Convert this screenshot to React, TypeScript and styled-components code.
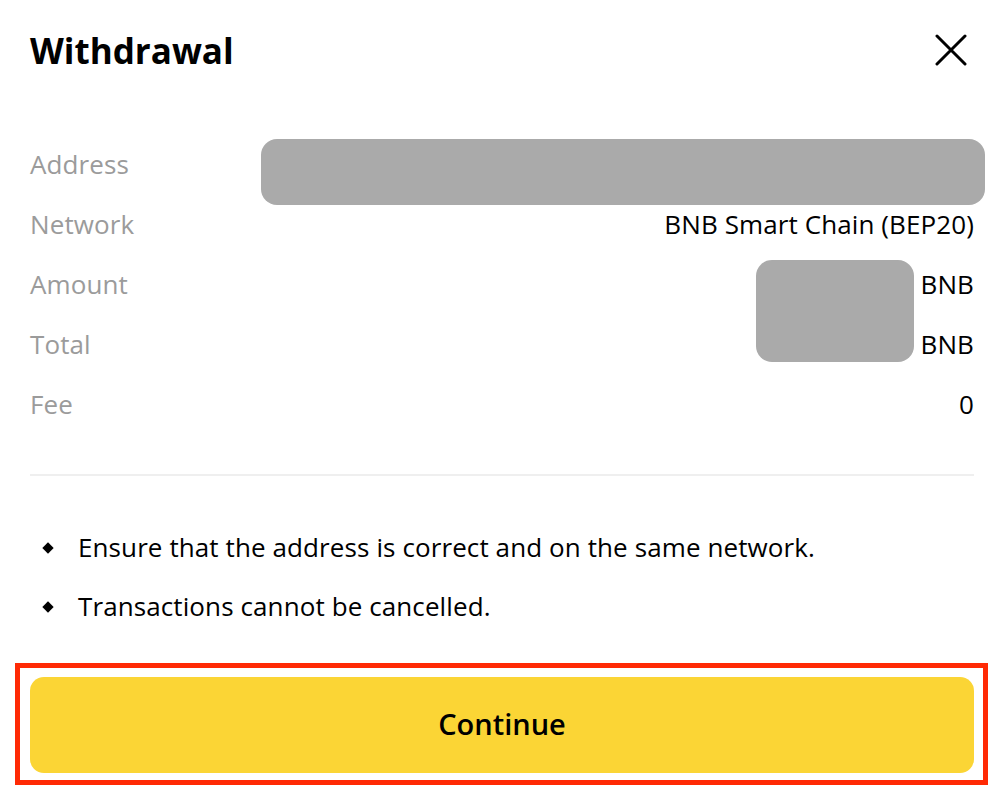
import React from "react";
import styled, { createGlobalStyle } from "styled-components";

const FONT = `"Open Sans", "Liberation Sans", sans-serif`;

const Global = createGlobalStyle`
  html, body { margin: 0; padding: 0; background: #ffffff; }
  body { font-family: ${FONT}; color: #000; }
`;

const Page = styled.div`
  width: 1006px;
  box-sizing: border-box;
  padding: 0 32px 0 30px;
`;

const Header = styled.div`
  height: 100px;
  display: flex;
  align-items: center;
  justify-content: space-between;
`;

const Title = styled.h1`
  margin: 0;
  font-size: 35px;
  font-weight: 700;
`;

const CloseButton = styled.button`
  border: 0;
  background: none;
  padding: 0;
  margin-right: 7px;
  width: 32px;
  height: 32px;
  display: flex;
  align-items: center;
  justify-content: center;
  cursor: pointer;
`;

const Details = styled.div`
  margin-top: 35px;
  display: grid;
  grid-template-columns: 231px 1fr;
  grid-template-rows: repeat(5, 60px);
  font-size: 26px;
  letter-spacing: 0.1px;
`;

const Label = styled.div<{ $row: number }>`
  grid-column: 1;
  grid-row: ${(p) => p.$row};
  display: flex;
  align-items: center;
  padding-bottom: 2px;
  color: #9b9b9b;
`;

const Value = styled.div<{ $row: number; $span?: number }>`
  grid-column: 2;
  grid-row: ${(p) => p.$row} / span ${(p) => p.$span ?? 1};
  display: flex;
  align-items: center;
  justify-content: flex-end;
  padding-bottom: 2px;
  color: #000;
`;

const Redacted = styled.div<{ $w?: string; $h: number }>`
  background: #aaaaaa;
  border-radius: 16px;
  width: ${(p) => p.$w ?? "auto"};
  height: ${(p) => p.$h}px;
`;

const AddressValue = styled(Value)`
  align-items: flex-start;
  justify-content: stretch;
  padding-bottom: 0;
  margin-right: -11px;
  & > div { flex: 1; margin-top: 4px; }
`;

const AmountCell = styled(Value)`
  align-items: flex-start;
  padding-bottom: 0;
  gap: 7px;
`;

const AmountBox = styled(Redacted)`
  margin-top: 5px;
`;

const UnitColumn = styled.div`
  display: grid;
  grid-template-rows: 60px 60px;
  & > span {
    display: flex;
    align-items: center;
    justify-content: flex-end;
    padding-bottom: 2px;
  }
`;

const Divider = styled.hr`
  margin: 39px 0 0;
  border: 0;
  height: 2px;
  background: #efefef;
`;

const Notes = styled.ul`
  list-style: none;
  margin: 42px 0 0;
  padding: 0;
`;

const Note = styled.li`
  position: relative;
  box-sizing: border-box;
  height: 59px;
  display: flex;
  align-items: center;
  padding: 0 0 2px 48px;
  font-size: 26px;
  letter-spacing: 0.1px;
  color: #000;
  &::before {
    content: "";
    position: absolute;
    left: 14px;
    top: 50%;
    width: 8px;
    height: 8px;
    background: #000;
    transform: translateY(-50%) rotate(45deg);
  }
`;

const Highlight = styled.div`
  margin: 27px -14px 0 -15px;
  border: 5px solid #ff2a05;
  padding: 9px 9px 7px 10px;
`;

const PrimaryButton = styled.button`
  width: 100%;
  height: 96px;
  border: 0;
  border-radius: 14px;
  padding: 0 0 4px;
  background: #fbd535;
  font-family: ${FONT};
  font-size: 29px;
  font-weight: 600;
  color: #000;
  cursor: pointer;
`;

export default function App() {
  return (
    <>
      <Global />
      <Page>
        <Header>
          <Title>Withdrawal</Title>
          <CloseButton aria-label="Close">
            <svg width="32" height="32" viewBox="0 0 32 32">
              <path d="M2 2 L30 30 M30 2 L2 30" stroke="#000" strokeWidth="3" strokeLinecap="round" />
            </svg>
          </CloseButton>
        </Header>
        <Details>
          <Label $row={1}>Address</Label>
          <AddressValue $row={1}>
            <Redacted $h={66} />
          </AddressValue>
          <Label $row={2}>Network</Label>
          <Value $row={2}>BNB Smart Chain (BEP20)</Value>
          <Label $row={3}>Amount</Label>
          <Label $row={4}>Total</Label>
          <AmountCell $row={3} $span={2}>
            <AmountBox $w="158px" $h={102} />
            <UnitColumn>
              <span>BNB</span>
              <span>BNB</span>
            </UnitColumn>
          </AmountCell>
          <Label $row={5}>Fee</Label>
          <Value $row={5}>0</Value>
        </Details>
        <Divider />
        <Notes>
          <Note>Ensure that the address is correct and on the same network.</Note>
          <Note>Transactions cannot be cancelled.</Note>
        </Notes>
        <Highlight>
          <PrimaryButton>Continue</PrimaryButton>
        </Highlight>
      </Page>
    </>
  );
}
